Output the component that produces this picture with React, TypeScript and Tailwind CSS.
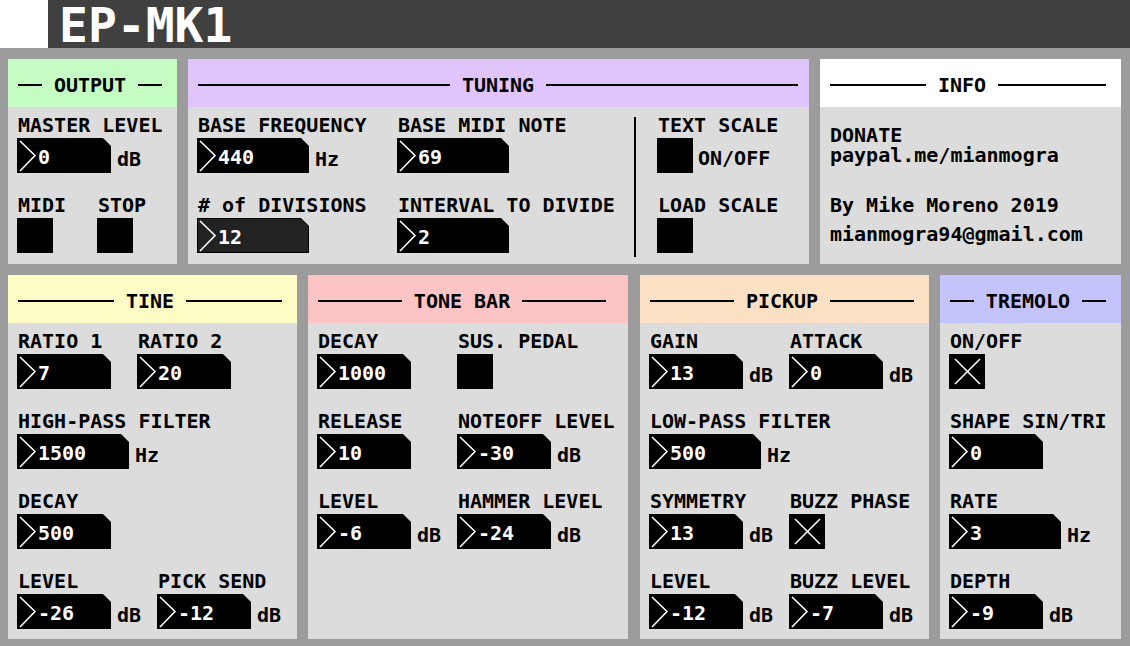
import type { ReactNode } from "react";
import clsx from "clsx";

// Pd-style number box: black body, cut top-right corner, chevron on the left
function NumBox({ value, wide, dark }: { value: string; wide?: boolean; dark?: boolean }) {
  return (
    <div
      className={clsx(
        "h-[35px] shrink-0 bg-black p-px [clip-path:polygon(0_0,calc(100%_-_8px)_0,100%_8px,100%_100%,0_100%)]",
        wide ? "w-[112px]" : "w-[94px]"
      )}
    >
      <div
        className={clsx(
          "flex h-full items-start [clip-path:polygon(0_0,calc(100%_-_7px)_0,100%_7px,100%_100%,0_100%)]",
          dark ? "bg-[#222222]" : "bg-black"
        )}
      >
        <svg width="20" height="33" className="shrink-0">
          <polyline points="2,2 17,16.5 2,32" fill="none" stroke="white" strokeWidth="1.6" />
        </svg>
        <span className="pt-[8px] leading-[20px] text-white">{value}</span>
      </div>
    </div>
  );
}

function Toggle({ on }: { on?: boolean }) {
  return (
    <div className="h-[35px] w-[36px] shrink-0 bg-black">
      {on && (
        <svg width="36" height="35">
          <line x1="6" y1="5" x2="31" y2="30" stroke="white" strokeWidth="1.6" />
          <line x1="31" y1="5" x2="6" y2="30" stroke="white" strokeWidth="1.6" />
        </svg>
      )}
    </div>
  );
}

function Unit({ children }: { children: ReactNode }) {
  return <span className="ml-[6px] mt-[11px] leading-[20px]">{children}</span>;
}

function Field({ label, className, children }: { label: string; className?: string; children: ReactNode }) {
  return (
    <div className={clsx("shrink-0", className)}>
      <div className="whitespace-nowrap pl-px leading-[20px]">{label}</div>
      <div className="mt-[3px] flex items-start">{children}</div>
    </div>
  );
}

function Row({ children }: { children: ReactNode }) {
  return <div className="flex">{children}</div>;
}

interface PanelProps {
  title: string;
  head: string;
  width: string;
  padRight?: string;
  children: ReactNode;
}

function Panel({ title, head, width, padRight, children }: PanelProps) {
  return (
    <div className={clsx("flex flex-col bg-[#dcdcdc]", width)}>
      <div className={clsx("flex h-[48px] items-center gap-[12px] pl-[10px] pt-[4px]", padRight ?? "pr-[15px]", head)}>
        <div className="h-[2px] flex-1 bg-black" />
        <span className="leading-[20px]">{title}</span>
        <div className="h-[2px] flex-1 bg-black" />
      </div>
      <div className="flex flex-1 flex-col gap-[22px] pl-[9px] pt-[8px]">{children}</div>
    </div>
  );
}

export default function App() {
  return (
    <div className="h-[646px] w-[1130px] overflow-hidden bg-[#9c9c9c] font-['DejaVu_Sans_Mono',monospace] text-[20px] font-bold text-black">
      <div className="flex h-[48px]">
        <div className="w-[48px] bg-white" />
        <div className="flex-1 bg-[#404040] pl-[11px] pt-[3px] text-[48px] leading-[45px] text-white">EP-MK1</div>
      </div>

      <div className="flex h-[216px] pl-[8px] pt-[11px]">
        <div className="flex gap-[11px]">
          <Panel title="OUTPUT" head="bg-[#c4fcc4]" width="w-[169px]">
            <Field label="MASTER LEVEL">
              <NumBox value="0" />
              <Unit>dB</Unit>
            </Field>
            <Row>
              <Field label="MIDI" className="w-[80px]">
                <Toggle />
              </Field>
              <Field label="STOP">
                <Toggle />
              </Field>
            </Row>
          </Panel>

          <Panel title="TUNING" head="bg-[#e0c4fc]" width="w-[621px]" padRight="pr-[11px]">
            <div className="flex">
              <div className="flex flex-col gap-[22px]">
                <Row>
                  <Field label="BASE FREQUENCY" className="w-[200px]">
                    <NumBox value="440" wide />
                    <Unit>Hz</Unit>
                  </Field>
                  <Field label="BASE MIDI NOTE" className="w-[237px]">
                    <NumBox value="69" wide />
                  </Field>
                </Row>
                <Row>
                  <Field label="# of DIVISIONS" className="w-[200px]">
                    <NumBox value="12" wide dark />
                  </Field>
                  <Field label="INTERVAL TO DIVIDE" className="w-[237px]">
                    <NumBox value="2" wide />
                  </Field>
                </Row>
              </div>
              <div className="mt-[2px] h-[140px] w-[2px] bg-black" />
              <div className="ml-[21px] flex flex-col gap-[22px]">
                <Field label="TEXT SCALE">
                  <Toggle />
                  <span className="ml-[5px] mt-[10px] leading-[20px]">ON/OFF</span>
                </Field>
                <Field label="LOAD SCALE">
                  <Toggle />
                </Field>
              </div>
            </div>
          </Panel>

          <div className="flex w-[301px] flex-col bg-[#dcdcdc]">
            <div className="flex h-[48px] items-center gap-[12px] bg-white pl-[10px] pr-[15px] pt-[4px]">
              <div className="h-[2px] w-[96px] bg-black" />
              <span className="leading-[20px]">INFO</span>
              <div className="h-[2px] flex-1 bg-black" />
            </div>
            <div className="pl-[10px] pt-[18px] leading-[20px]">
              <div>DONATE</div>
              <div>paypal.me/mianmogra</div>
              <div className="mt-[30px]">By Mike Moreno 2019</div>
              <div className="mt-[9px]">mianmogra94@gmail.com</div>
            </div>
          </div>
        </div>
      </div>

      <div className="flex h-[375px] pl-[8px] pt-[11px]">
        <div className="flex gap-[11px]">
          <Panel title="TINE" head="bg-[#fcfcc4]" width="w-[289px]">
            <Row>
              <Field label="RATIO 1" className="w-[120px]">
                <NumBox value="7" />
              </Field>
              <Field label="RATIO 2">
                <NumBox value="20" />
              </Field>
            </Row>
            <Field label="HIGH-PASS FILTER">
              <NumBox value="1500" wide />
              <Unit>Hz</Unit>
            </Field>
            <Field label="DECAY">
              <NumBox value="500" />
            </Field>
            <Row>
              <Field label="LEVEL" className="w-[140px]">
                <NumBox value="-26" />
                <Unit>dB</Unit>
              </Field>
              <Field label="PICK SEND">
                <NumBox value="-12" />
                <Unit>dB</Unit>
              </Field>
            </Row>
          </Panel>

          <Panel title="TONE BAR" head="bg-[#fcc4c4]" width="w-[320px]" padRight="pr-[22px]">
            <Row>
              <Field label="DECAY" className="w-[140px]">
                <NumBox value="1000" />
              </Field>
              <Field label="SUS. PEDAL">
                <Toggle />
              </Field>
            </Row>
            <Row>
              <Field label="RELEASE" className="w-[140px]">
                <NumBox value="10" />
              </Field>
              <Field label="NOTEOFF LEVEL">
                <NumBox value="-30" />
                <Unit>dB</Unit>
              </Field>
            </Row>
            <Row>
              <Field label="LEVEL" className="w-[140px]">
                <NumBox value="-6" />
                <Unit>dB</Unit>
              </Field>
              <Field label="HAMMER LEVEL">
                <NumBox value="-24" />
                <Unit>dB</Unit>
              </Field>
            </Row>
          </Panel>

          <div className="ml-px flex">
            <Panel title="PICKUP" head="bg-[#fce0c4]" width="w-[289px]">
              <Row>
                <Field label="GAIN" className="w-[140px]">
                  <NumBox value="13" />
                  <Unit>dB</Unit>
                </Field>
                <Field label="ATTACK">
                  <NumBox value="0" />
                  <Unit>dB</Unit>
                </Field>
              </Row>
              <Field label="LOW-PASS FILTER">
                <NumBox value="500" wide />
                <Unit>Hz</Unit>
              </Field>
              <Row>
                <Field label="SYMMETRY" className="w-[140px]">
                  <NumBox value="13" />
                  <Unit>dB</Unit>
                </Field>
                <Field label="BUZZ PHASE">
                  <Toggle on />
                </Field>
              </Row>
              <Row>
                <Field label="LEVEL" className="w-[140px]">
                  <NumBox value="-12" />
                  <Unit>dB</Unit>
                </Field>
                <Field label="BUZZ LEVEL">
                  <NumBox value="-7" />
                  <Unit>dB</Unit>
                </Field>
              </Row>
            </Panel>
          </div>

          <Panel title="TREMOLO" head="bg-[#c4c4fc]" width="w-[181px]">
            <Field label="ON/OFF">
              <Toggle on />
            </Field>
            <Field label="SHAPE SIN/TRI">
              <NumBox value="0" />
            </Field>
            <Field label="RATE">
              <NumBox value="3" wide />
              <Unit>Hz</Unit>
            </Field>
            <Field label="DEPTH">
              <NumBox value="-9" />
              <Unit>dB</Unit>
            </Field>
          </Panel>
        </div>
      </div>
    </div>
  );
}
